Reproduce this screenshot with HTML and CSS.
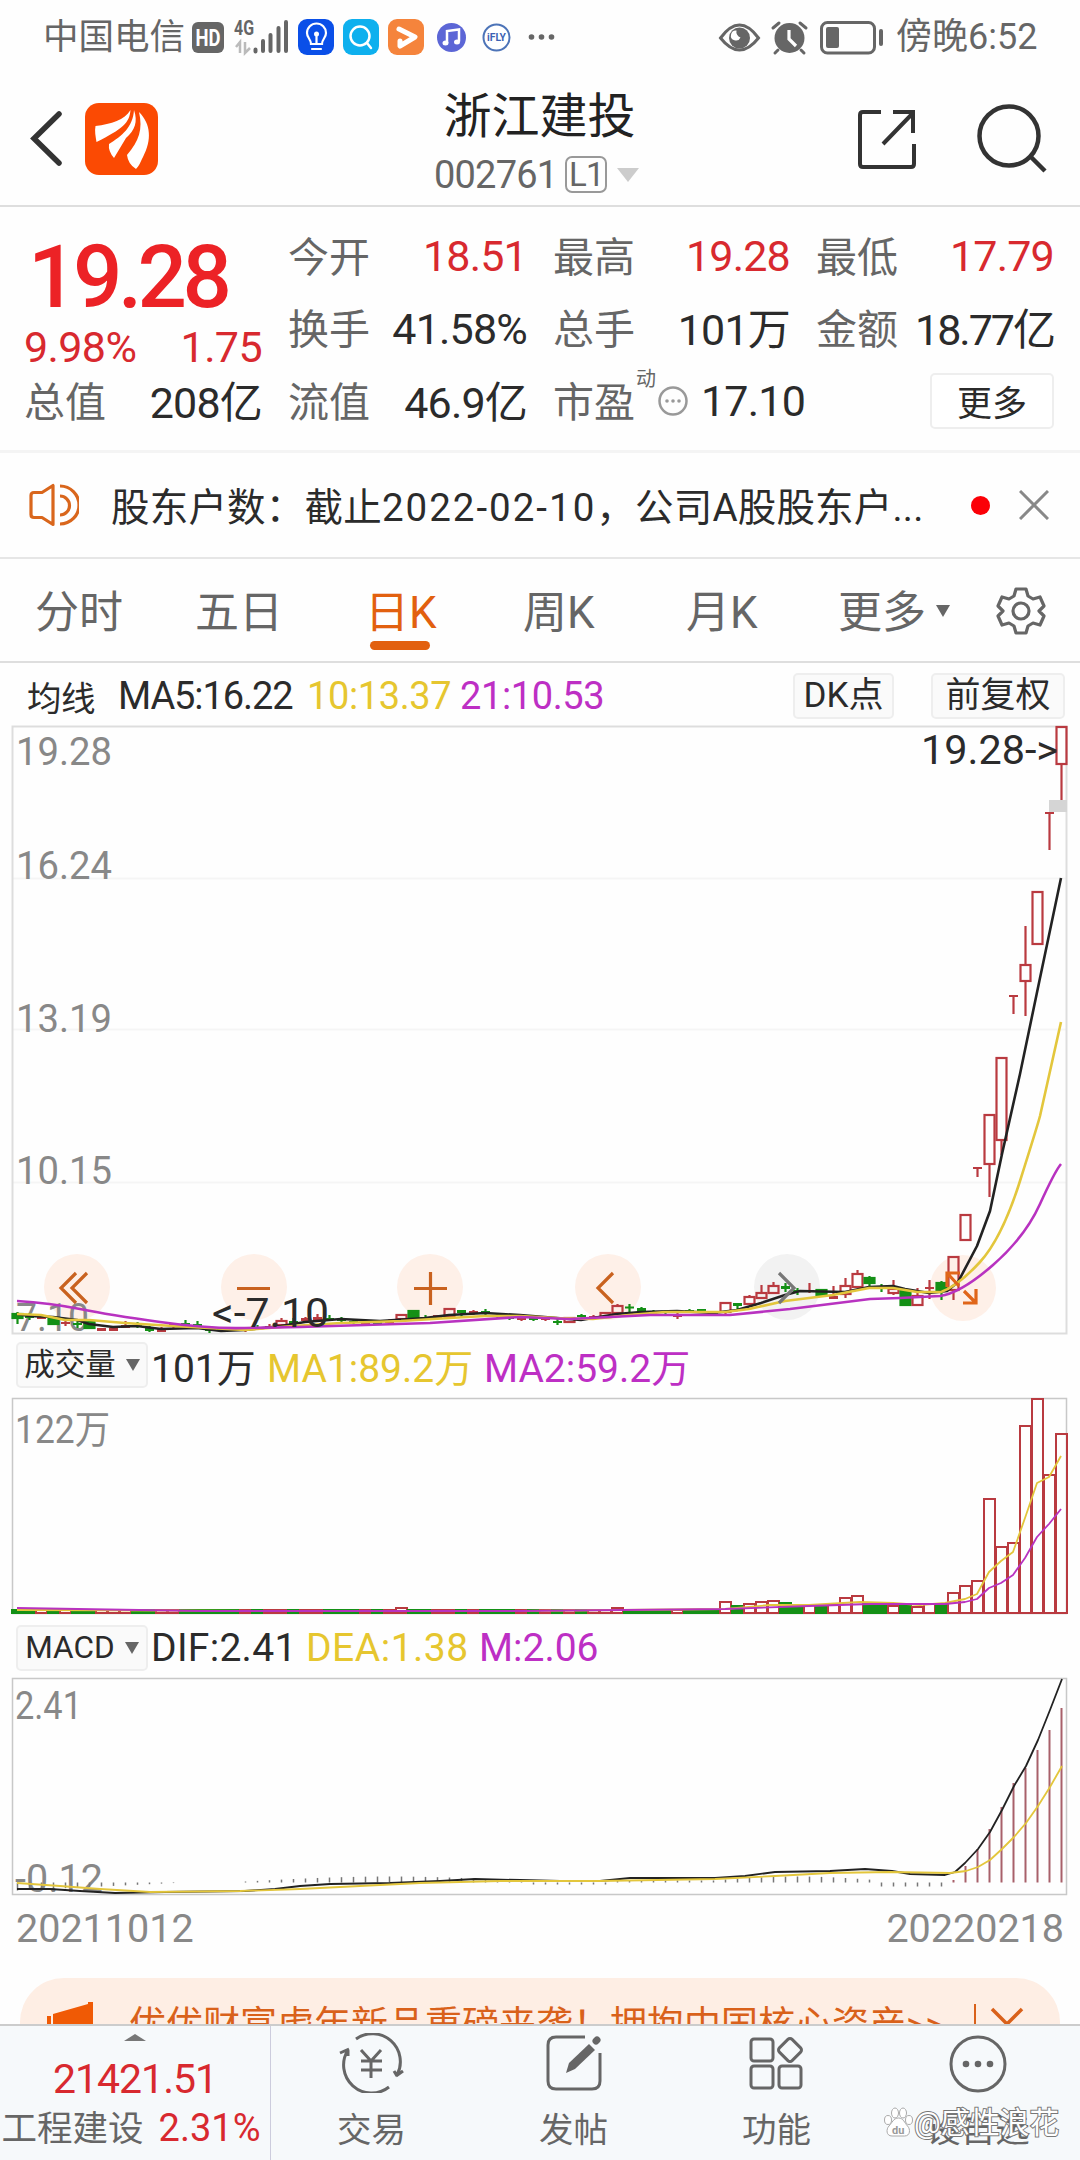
FILE: index.html
```
<!DOCTYPE html>
<html lang="zh-CN">
  <head>
    <meta charset="UTF-8" />
    <meta name="viewport" content="width=device-width, initial-scale=1.0" />
    <title>浙江建投 002761</title>
    <link rel="stylesheet" href="styles.css">
  </head>
  <body>
    <div class="status-bar">
      <span class="carrier">中国电信</span>
      <svg class="status-icons" width="370" height="40" viewBox="190 16 370 40">
        <rect x="192" y="21" width="32" height="31" rx="6" fill="#666" />
        <text x="208" y="45" class="hd" textLength="25" lengthAdjust="spacingAndGlyphs">HD</text>
        <text x="234" y="34" class="net" textLength="20" lengthAdjust="spacingAndGlyphs">4G</text>
        <path d="M240 52V41l-4 5M245 41v11l5-5" fill="none" stroke="#bbb" stroke-width="2.5" />
        <path d="M255.5 50.5v-2M263 50V40M270.5 50V34M278.5 50V27M286 50V21" stroke="#666" stroke-width="4" stroke-linecap="round" />
        <rect x="298" y="18" width="36" height="36" rx="9" fill="#0a4fe8" />
        <path d="M311 43c0-5-4-6-4-11a9.5 9.5 0 0 1 19 0c0 5-4 6-4 11zM312 48h9M316.5 43v-9" fill="none" stroke="#fff" stroke-width="2.2" stroke-linecap="round" />
        <circle cx="316.5" cy="33" r="2.5" fill="#fff" />
        <rect x="343" y="18" width="36" height="36" rx="9" fill="#0eb0ee" />
        <circle cx="360" cy="35" r="9.5" fill="none" stroke="#fff" stroke-width="2.5" />
        <path d="M367 42l4 5" stroke="#fff" stroke-width="2.5" stroke-linecap="round" />
        <rect x="388" y="18" width="36" height="36" rx="9" fill="#f5843c" />
        <path d="M399 28l16 8-15 9v-5" fill="none" stroke="#fff" stroke-width="5" stroke-linejoin="round" stroke-linecap="round" />
        <circle cx="451.5" cy="36.5" r="14.5" fill="#5c66d6" />
        <path d="M447 42V30l12-1.5v12" fill="none" stroke="#fff" stroke-width="2.5" />
        <ellipse cx="445.5" cy="42" rx="3" ry="2.5" fill="#fff" />
        <ellipse cx="457" cy="41" rx="3" ry="2.5" fill="#fff" />
        <circle cx="496.5" cy="36.5" r="13" fill="#fff" stroke="#4d74b8" stroke-width="2" />
        <text x="487" y="40" class="ifly" textLength="19" lengthAdjust="spacingAndGlyphs">iFLY</text>
        <g fill="#666"><circle cx="531.5" cy="36" r="2.8" /><circle cx="541.5" cy="36" r="2.8" /><circle cx="551.5" cy="36" r="2.8" /></g>
      </svg>
      <svg class="status-right" width="170" height="40" viewBox="716 16 170 40">
        <path d="M720.5 37q19-26 38 0q-19 24-38 0z" fill="none" stroke="#666" stroke-width="3" />
        <circle cx="739.5" cy="37" r="10.5" fill="#666" />
        <path d="M736.5 29.5a5 5 0 1 0 4 7a6 6 0 0 1-4-7" fill="#fff" />
        <circle cx="789.5" cy="37" r="15" fill="#666" />
        <path d="M773 27l6-5M800 22l6 5M778 49l-3 3M801 49l3 3" stroke="#666" stroke-width="3" stroke-linecap="round" />
        <path d="M789 29v9l7 7" fill="none" stroke="#fff" stroke-width="3.2" />
        <rect x="821.5" y="21.5" width="53" height="30.5" rx="6" fill="none" stroke="#666" stroke-width="3" />
        <rect x="826" y="26" width="13" height="21" rx="2" fill="#666" />
        <rect x="879" y="28" width="4" height="17" rx="2" fill="#666" />
      </svg>
      <span class="clock">傍晚6:52</span>
    </div>

    <div class="header">
      <svg width="180" height="100" viewBox="0 90 180 100">
        <path d="M59 114L34 138.5l25 24.5" fill="none" stroke="#333" stroke-width="5.5" stroke-linecap="round" />
        <rect x="85" y="103" width="73" height="72" rx="14" fill="#fb4a03" />
        <g fill="#fff">
          <path d="M95.500 126c16-2 29-6 35-16c-1 13-8 19-34 32c-1-6-2-11-1-16z" />
          <path d="M134 110c4 12 1 20-8 28l-12 20q-6-7-5-14c13-8 24-17 25-34z" />
          <path d="M139 112c12 12 13 28 4 45c-3 6-4 9-7 12q-8-5-9-14c12-14 16-26 12-43z" />
        </g>
      </svg>
      <div class="stock-title">
        <div class="stock-name">浙江建投</div>
        <div class="stock-code">
          <span>002761</span><span class="level">L1</span><span class="triangle"></span>
        </div>
      </div>
      <svg class="header-tools" width="200" height="70" viewBox="850 104 200 70">
        <g fill="none" stroke="#333" stroke-width="4">
          <path d="M881 112h-18q-3 0-3 3v49q0 3 3 3h48q3 0 3-3v-20M893 112h20v21M913 113L883 144" />
          <circle cx="1009" cy="136" r="29.5" stroke-width="4.5" />
          <path d="M1031 157l14 14" stroke-width="4.5" />
        </g>
      </svg>
    </div>

    <div class="quote">
      <div class="quote-col first">
        <div class="price">19.28</div>
        <div class="cell change red"><span>9.98%</span><span>1.75</span></div>
        <div class="cell"><label>总值</label><b class="unit">208亿</b></div>
      </div>
      <div class="quote-col">
        <div class="cell"><label>今开</label><b class="red">18.51</b></div>
        <div class="cell"><label>换手</label><b>41.58%</b></div>
        <div class="cell"><label>流值</label><b class="unit">46.9亿</b></div>
      </div>
      <div class="quote-col">
        <div class="cell"><label>最高</label><b class="red">19.28</b></div>
        <div class="cell"><label>总手</label><b class="unit">101万</b></div>
        <div class="cell pe">
          <label>市盈</label><sup>动</sup>
          <svg width="30" height="30" viewBox="0 0 30 30">
            <circle cx="15" cy="15" r="13.5" fill="none" stroke="#999" stroke-width="2.5" />
            <g fill="#999"><circle cx="9" cy="15" r="1.8" /><circle cx="15" cy="15" r="1.8" /><circle cx="21" cy="15" r="1.8" /></g>
          </svg>
          <b>17.10</b>
        </div>
      </div>
      <div class="quote-col">
        <div class="cell"><label>最低</label><b class="red">17.79</b></div>
        <div class="cell"><label>金额</label><b class="unit tight">18.77亿</b></div>
        <div class="cell end"><button class="more">更多</button></div>
      </div>
    </div>

    <div class="notice">
      <svg width="50" height="44" viewBox="0 0 50 44" fill="none" stroke="#d9661c" stroke-width="3.2">
        <path d="M24 2.5v39L13 34.5H5q-3 0-3-3v-19q0-3 3-3h8z" stroke-linejoin="round" />
        <path d="M31 13a9.5 9.5 0 0 1 0 19M31 3a19 19 0 0 1 0 38" />
      </svg>
      <span class="notice-text">股东户数：截止<span class="date">2022-02-10</span>，公司A股股东户...</span>
      <span class="dot"></span>
      <svg width="30" height="30" viewBox="0 0 30 30"><path d="M1 1l28 28M29 1L1 29" stroke="#888" stroke-width="3" /></svg>
    </div>

    <div class="tabs">
      <span class="tab">分时</span>
      <span class="tab">五日</span>
      <span class="tab active">日K</span>
      <span class="tab">周K</span>
      <span class="tab">月K</span>
      <span class="tab">更多<i class="caret"></i></span>
      <svg width="50" height="50" viewBox="0 0 50 50" fill="none" stroke="#666" stroke-width="3.2" stroke-linejoin="round">
        <path d="M20 3h10l2 7 5 3 7-2 4 9-5 5 5 5-4 9-7-2-5 3-2 7H20l-2-7-5-3-7 2-4-9 5-5-5-5 4-9 7 2 5-3z" />
        <circle cx="25" cy="25" r="8" />
      </svg>
    </div>

    <div class="ma-row">
      <span class="ma-name">均线</span>
      <span class="ma5">MA5:16.22</span>
      <span class="ma10 yellow">10:13.37</span>
      <span class="ma21 purple">21:10.53</span>
      <button class="tool dk">DK点</button>
      <button class="tool fq">前复权</button>
    </div>

    <svg class="chart" width="1080" height="608" viewBox="0 726 1080 608">
      <path class="grid" d="M12 878.5H1066M12 1029.5H1066M12 1182.5H1066" />
      <path class="frame" d="M12.5 726.5H1066.5V1333.5H12.5z" />
      <g id="pads">
        <circle cx="77" cy="1287" r="33" /><circle cx="254" cy="1287" r="33" />
        <circle cx="430" cy="1287" r="33" /><circle cx="608" cy="1287" r="33" />
        <circle cx="787" cy="1287" r="33" class="off" /><circle cx="963" cy="1288" r="33" />
      </g>
      <g class="axis">
        <text x="16" y="765" textLength="96" lengthAdjust="spacingAndGlyphs">19.28</text>
        <text x="16" y="879" textLength="96" lengthAdjust="spacingAndGlyphs">16.24</text>
        <text x="16" y="1032" textLength="96" lengthAdjust="spacingAndGlyphs">13.19</text>
        <text x="16" y="1184" textLength="96" lengthAdjust="spacingAndGlyphs">10.15</text>
        <text x="16" y="1331" textLength="73" lengthAdjust="spacingAndGlyphs">7.10</text>
      </g>
      <g id="candles"></g>
      <rect x="1049" y="800" width="18" height="12" fill="#d5d5d5" />
      <polyline class="line dark" points="17,1314 29,1316 53,1317 77,1320 89,1324 113,1327 137,1326 161,1329 197,1328 221,1331 245,1330 281,1326 305,1322 341,1319 380,1321 425,1318 449,1315 485,1313 520,1315 557,1318 581,1320 617,1314 641,1312 677,1311 713,1313 737,1310 761,1303 785,1295 800,1291 845,1292 869,1287 893,1286 905,1289 929,1293 947,1291 958,1282 977,1246 990,1211 1002,1154 1020,1074 1040,978 1061,878" />
      <path class="line gold" d="M17 1314L41 1315 65 1320 89 1320 125 1323 173 1326 245 1330 293 1326 341 1323 401 1321 449 1318 485 1316 520 1316 557 1318 593 1319 629 1315 665 1312 725 1312 749 1309 785 1301 833 1295 869 1288 893 1288 917 1292 941 1292Q958 1286 980 1262T1020 1181T1040 1116T1061 1022" />
      <path class="line pink" d="M17 1301Q50 1303 80 1309T160 1322T245 1328L300 1327 430 1323 520 1317 570 1319 650 1315 730 1315 790 1309 870 1299 900 1298 940 1296Q961 1293 993 1265T1040 1204T1061 1164" />
      <g fill="none" stroke="#c9621f" stroke-width="3.2">
        <path d="M76 1273l-15 15 15 15M87 1273l-15 15 15 15" />
        <path d="M237 1288.5h33" />
        <path d="M414 1288.5h33M430.5 1272v33" />
        <path d="M613 1273l-15 15 15 15" />
        <path d="M779 1273l15 15-15 15" stroke="#777" />
        <path d="M947 1287v-14h13M948 1274l11 12M976 1289v14h-13M976 1303l-12-12" stroke="#e0661a" />
      </g>
      <g class="mark">
        <text x="921" y="764" textLength="137" lengthAdjust="spacingAndGlyphs">19.28-&gt;</text>
        <text x="212" y="1327" textLength="117" lengthAdjust="spacingAndGlyphs">&lt;-7.10</text>
      </g>
    </svg>

    <div class="ind-row">
      <button class="picker">成交量<i class="caret"></i></button>
      <span class="v1">101万</span>
      <span class="v2 yellow">MA1:89.2万</span>
      <span class="v3 purple">MA2:59.2万</span>
    </div>
    <svg class="chart" width="1080" height="218" viewBox="0 1398 1080 218">
      <path class="frame dim" d="M12.5 1398.5H1066.5V1613.5H12.5z" />
      <g class="axis"><text x="15" y="1443" textLength="95" lengthAdjust="spacingAndGlyphs">122万</text></g>
      <g id="volume"></g>
      <polyline class="thin gold" points="17,1610 300,1611 520,1611 725,1609 770,1605 809,1605 860,1602 893,1603 920,1605 945,1603 965,1599 977,1594 989,1572 1001,1561 1013,1552 1025,1518 1037,1483 1049,1477 1061,1456" />
      <polyline class="thin pink" points="17,1608 200,1611 520,1611 725,1609 809,1606 870,1604 945,1604 965,1602 977,1599 989,1588 1001,1583 1013,1575 1025,1558 1037,1537 1049,1524 1061,1509" />
    </svg>

    <div class="ind-row macd">
      <button class="picker">MACD<i class="caret"></i></button>
      <span class="m1">DIF:2.41</span>
      <span class="m2 yellow">DEA:1.38</span>
      <span class="m3 purple">M:2.06</span>
    </div>
    <svg class="chart" width="1080" height="217" viewBox="0 1678 1080 217">
      <path class="frame dim" d="M12.5 1678.5H1066.5V1894.5H12.5z" />
      <g class="axis">
        <text x="15" y="1719" textLength="67" lengthAdjust="spacingAndGlyphs">2.41</text>
        <text x="15" y="1892" textLength="88" lengthAdjust="spacingAndGlyphs">-0.12</text>
      </g>
      <g id="macd"></g>
      <polyline class="thin dark" points="17,1889 50,1889 80,1891 115,1893 165,1892 245,1891 275,1889 300,1886 330,1884 390,1883 440,1881 475,1879 520,1880 560,1881 600,1881 630,1878 715,1878 745,1876 775,1872 830,1871 865,1869 892,1871 910,1874 945,1875 955,1872 965,1863 978,1849 990,1832 1002,1810 1014,1786 1026,1766 1038,1740 1050,1710 1062,1679" />
      <polyline class="thin gold" points="17,1883 60,1886 100,1889 150,1892 240,1891 300,1889 360,1886 420,1883 500,1881 600,1881 715,1879 775,1876 830,1873 890,1872 950,1873 966,1871 978,1867 990,1860 1002,1849 1014,1837 1026,1823 1038,1806 1050,1787 1062,1766" />
    </svg>

    <div class="dates"><span>20211012</span><span>20220218</span></div>

    <div class="promo-wrap">
      <div class="promo">
        <svg width="60" height="50" viewBox="0 0 60 50" fill="#f05a05"><path d="M0 14h4v30H0zM6 12L41 2V0h5v40h-5L6 32z" /></svg>
        <span class="promo-text">优优财富虎年新品重磅来袭！拥抱中国核心资产&gt;&gt;</span>
        <span class="promo-line"></span>
        <svg width="34" height="34" viewBox="0 0 34 34"><path d="M2 2l30 30M32 2L2 32" stroke="#d9611a" stroke-width="3.5" /></svg>
      </div>
    </div>

    <div class="nav">
      <div class="index">
        <i class="up"></i>
        <div class="index-value red">21421.51</div>
        <div class="index-name">工程建设<span class="red">2.31%</span></div>
      </div>
      <div class="nav-item">
        <svg width="66" height="60" viewBox="0 0 66 60" fill="none" stroke="#666" stroke-width="3">
          <path d="M17 6A28 28 0 0 1 58 42M58 43l-3-5M57 43l7-5M50 54A28 28 0 0 1 9 17M1 20l9-4M9 17v6" />
          <path d="M22 17l10 11 10-11M32 28v17M22 28h21M22 37h21" />
        </svg>
        <span>交易</span>
      </div>
      <div class="nav-item">
        <svg width="66" height="60" viewBox="0 0 66 60" fill="none" stroke="#666" stroke-width="3">
          <path d="M44 4H15q-8 0-8 8v36q0 8 8 8h36q8 0 8-8V20" />
          <path d="M25 40l3-10 20-19 6 6-20 19z" fill="#666" stroke="none" />
          <path d="M55 8l1-1" stroke-width="7" stroke-linecap="round" />
        </svg>
        <span>发帖</span>
      </div>
      <div class="nav-item">
        <svg width="66" height="60" viewBox="0 0 66 60" fill="none" stroke="#666" stroke-width="3">
          <rect x="7" y="6" width="22" height="22" rx="3" /><rect x="7" y="33" width="22" height="22" rx="3" />
          <rect x="35" y="33" width="22" height="22" rx="3" />
          <rect x="37" y="8" width="18" height="18" rx="3" transform="rotate(45 46 17)" />
        </svg>
        <span>功能</span>
      </div>
      <div class="nav-item">
        <svg width="66" height="60" viewBox="0 0 66 60" fill="none" stroke="#666" stroke-width="3">
          <circle cx="33" cy="31" r="27" />
          <g fill="#666" stroke="none"><circle cx="21" cy="31" r="3.3" /><circle cx="33" cy="31" r="3.3" /><circle cx="45" cy="31" r="3.3" /></g>
        </svg>
        <span>设自选</span>
      </div>
      <svg class="watermark" width="190" height="44" viewBox="0 0 190 44">
        <g fill="#fff" stroke="#aaa" stroke-width="1">
          <ellipse cx="7" cy="18" rx="3.5" ry="4.5" /><ellipse cx="14" cy="11" rx="3.5" ry="5" />
          <ellipse cx="22" cy="11" rx="3.5" ry="5" /><ellipse cx="28" cy="18" rx="3.5" ry="4.5" />
          <path d="M17.5 16c5 0 6 5 9 8s3 10-3 10H11c-6 0-6-7-3-10s4.500-8 9.500-8z" />
        </g>
        <text x="11" y="32" class="du">du</text>
        <text x="33" y="31" class="wm" textLength="145" lengthAdjust="spacingAndGlyphs">@感性浪花</text>
      </svg>
    </div>

    <script src="chart.js"></script>
  </body>
</html>
```
FILE: styles.css
```
* {
  box-sizing: border-box;
}
body {
  margin: 0;
  width: 1080px;
  height: 2160px;
  overflow: hidden;
  display: flex;
  flex-direction: column;
  background: #fefefe;
  color: #2b2b2b;
  font-family: Roboto, "Noto Sans CJK SC", sans-serif;
}
svg,
span {
  flex-shrink: 0;
}
svg {
  display: block;
}
button {
  font-family: inherit;
  color: #2b2b2b;
  padding: 0;
  background: #fafafa;
  border: 2px solid #eee;
  border-radius: 5px;
}
.red {
  color: #d8292f;
}
.yellow {
  color: #e6c62f;
}
.purple {
  color: #bd2fc4;
}

/* status bar */
.status-bar {
  height: 74px;
  padding: 0 43px 0 43px;
  display: flex;
  align-items: center;
  color: #666;
  font-size: 35.5px;
  line-height: 40px;
}
.carrier {
  width: 147px;
}
.status-right {
  margin-left: 156px;
}
.clock {
  margin-left: 10px;
  font-size: 36px;
  white-space: nowrap;
}
.hd {
  font: bold 23px Roboto;
  fill: #fff;
  text-anchor: middle;
}
.net {
  font: bold 20px Roboto;
  fill: #666;
}
.ifly {
  font: bold 10px Roboto;
  fill: #3c62b4;
}

/* header */
.header {
  height: 133px;
  border-bottom: 2px solid #dedede;
  display: flex;
  justify-content: space-between;
  padding-top: 16px;
}
.stock-title {
  width: 210px;
  margin-left: 76px;
}
.stock-name {
  font-size: 48px;
  line-height: 54px;
  color: #222;
  margin: 0 0 0 -27px;
  text-align: center;
  white-space: nowrap;
}
.stock-code {
  display: flex;
  align-items: center;
  margin: 11px 0 0 -14px;
  color: #666;
  font-size: 38px;
  line-height: 40px;
  letter-spacing: -0.8px;
}
.level {
  width: 42px;
  height: 37px;
  margin-left: 8px;
  border: 2px solid #999;
  border-radius: 7px;
  font-size: 33px;
  line-height: 34px;
  text-align: center;
}
.triangle {
  margin-left: 10px;
  border: 11px solid transparent;
  border-top: 14px solid #ccc;
  border-bottom: 0;
}
.header-tools {
  margin: 14px 30px 0 0;
}

/* quote block */
.quote {
  height: 247px;
  padding: 13px 0 0 24px;
  border-bottom: 3px solid #f4f4f4;
  display: grid;
  grid-template-columns: 238px 239px 237px 238px;
  column-gap: 26px;
}
.cell {
  height: 72.5px;
  display: flex;
  align-items: center;
  justify-content: space-between;
  font-size: 43px;
  white-space: nowrap;
}
.cell label {
  color: #666;
  font-size: 41px;
  padding-bottom: 5px;
}
.cell b {
  font-weight: normal;
  letter-spacing: -0.8px;
}
.cell .unit {
  padding-bottom: 5px;
}
.cell .tight {
  letter-spacing: -2px;
}
.price {
  height: 110px;
  padding-left: 4px;
  color: #ec2226;
  font-size: 87px;
  font-weight: 500;
  line-height: 114px;
  letter-spacing: -4.5px;
}
.first .change {
  height: 35px;
  line-height: 35px;
  letter-spacing: -0.6px;
}
.pe {
  justify-content: flex-start;
}
.pe sup {
  font-size: 20px;
  color: #666;
  margin: -44px 2px 0 1px;
  line-height: 20px;
}
.pe b {
  margin-left: 13px;
}
.cell.end {
  justify-content: flex-end;
}
.more {
  width: 124px;
  height: 56px;
  padding-bottom: 3px;
  font-size: 35px;
  background: #fff;
}

/* notice */
.notice {
  height: 106px;
  border-bottom: 2px solid #e6e6e6;
  display: flex;
  align-items: center;
  padding: 0 31px 0 29px;
}
.notice-text {
  width: 892px;
  padding: 0 0 2px 32px;
  font-size: 38.5px;
  letter-spacing: 0.2px;
  white-space: nowrap;
}
.date {
  letter-spacing: 2px;
}
.dot {
  width: 19px;
  height: 19px;
  margin-right: auto;
  border-radius: 50%;
  background: #fb0007;
}

/* period tabs */
.tabs {
  height: 104px;
  border-bottom: 2px solid #dedede;
  display: grid;
  grid-template-columns: 160px 170px 158px 163px 152px 158px 50px;
  padding-left: 35px;
  align-items: center;
}
.tab {
  height: 104px;
  line-height: 108px;
  color: #666;
  font-size: 44px;
  white-space: nowrap;
}
.active {
  color: #e2600f;
  display: flex;
  flex-direction: column;
}
.active::after {
  content: "";
  width: 60px;
  height: 9px;
  margin: -26px 0 0 5px;
  border-radius: 5px;
  background: #e2600f;
}
.caret {
  display: inline-block;
  margin-left: 10px;
  border: 7.5px solid transparent;
  border-top: 12px solid #666;
  border-bottom: 0;
  vertical-align: middle;
}
.tab .caret {
  margin-bottom: 12px;
}

/* moving average row */
.ma-row {
  height: 63px;
  display: flex;
  align-items: center;
  padding: 2px 15px 0 27px;
  font-size: 38px;
  letter-spacing: -0.4px;
  white-space: nowrap;
}
.ma-name {
  width: 91px;
  font-size: 34.5px;
}
.ma5 {
  width: 189px;
  letter-spacing: -1.1px;
}
.ma10 {
  width: 153px;
}
.tool {
  height: 46px;
  font-size: 35px;
  line-height: 38px;
}
.dk {
  width: 101px;
  margin-left: auto;
}
.fq {
  width: 134px;
  margin-left: 37px;
}

/* charts */
.chart {
  flex-shrink: 0;
  overflow: visible;
}
.frame {
  fill: none;
  stroke: #ddd;
  stroke-width: 2;
}
.dim {
  stroke: #c8c8c8;
  stroke-width: 1.5;
}
.grid {
  stroke: #f5f5f5;
  stroke-width: 2;
}
.axis text {
  font-size: 39px;
  fill: #888;
}
.mark text {
  font-size: 40px;
  fill: #2b2b2b;
}
#pads circle {
  fill: #fef0e8;
}
#pads .off {
  fill: #f2f2f2;
}
.line,
.thin {
  fill: none;
  stroke-width: 2.6;
  stroke-linejoin: round;
}
.thin {
  stroke-width: 1.8;
}
.dark {
  stroke: #222;
}
.gold {
  stroke: #e3c63c;
}
.pink {
  stroke: #b832c0;
}

/* indicator rows */
.ind-row {
  height: 64px;
  display: flex;
  align-items: center;
  padding: 0 0 2px 16px;
  font-size: 39px;
  white-space: nowrap;
}
.ind-row.macd {
  height: 62px;
  padding: 2px 0 0 16px;
}
.picker {
  width: 132px;
  height: 46px;
  margin-right: 3px;
  font-size: 30.5px;
  line-height: 36px;
  display: flex;
  align-items: center;
  justify-content: center;
}
.macd .picker {
  font-size: 31.5px;
}
.v1 {
  width: 116px;
}
.v2 {
  width: 217px;
}
.m1 {
  width: 155px;
  letter-spacing: 0.3px;
}
.m2 {
  width: 173px;
  letter-spacing: 0.5px;
}

.dates {
  height: 83px;
  padding: 0 16px;
  display: flex;
  justify-content: space-between;
  color: #888;
  font-size: 39.5px;
  line-height: 67px;
}

/* promo strip, cut off by the nav */
.promo-wrap {
  height: 46px;
  overflow: hidden;
  padding: 0 20px;
}
.promo {
  height: 92px;
  padding: 0 36px 0 27px;
  border-radius: 44px;
  background: #feeee4;
  color: #d9611a;
  display: flex;
  align-items: center;
}
.promo svg:first-child {
  margin-top: 6px;
}
.promo-text {
  width: 867px;
  padding: 0 0 5px 22px;
  font-size: 37px;
  white-space: nowrap;
}
.promo-line {
  width: 2px;
  height: 40px;
  margin-right: auto;
  background: #d9611a;
}

/* bottom navigation */
.nav {
  position: relative;
  height: 136px;
  flex-shrink: 0;
  border-top: 2px solid #ccc;
  background: #f6f9fb;
  display: grid;
  grid-template-columns: 271px 201px 203px 203px 200px;
  color: #666;
}
.index {
  border-right: 1px solid #ccd;
  display: flex;
  flex-direction: column;
  align-items: center;
  padding-top: 8px;
  white-space: nowrap;
}
.up {
  border: 11px solid transparent;
  border-top: 0;
  border-bottom: 7px solid #777;
}
.index-value {
  margin-top: 14px;
  font-size: 41px;
  line-height: 48px;
  letter-spacing: -1px;
}
.index-name {
  font-size: 35.5px;
  line-height: 50px;
  margin: 0 8px 0 0;
}
.index-name span {
  margin-left: 15px;
  font-size: 38px;
}
.nav-item {
  display: flex;
  flex-direction: column;
  align-items: center;
  padding-top: 7px;
}
.nav-item span {
  margin-top: 12px;
  font-size: 34.5px;
  line-height: 50px;
}
.watermark {
  position: absolute;
  left: 881px;
  top: 76px;
}
.wm {
  font-size: 30px;
  fill: #fff;
  stroke: #777;
  stroke-width: 2;
  paint-order: stroke;
}
.du {
  font: bold 11px Roboto;
  fill: #999;
}
```
FILE: chart.js
```
const STEP = 12;
const FIRST_X = 17.5;
const RED = "#b93a40";
const GREEN = "#149016";

// [day, colour, body top, body bottom, wick top, wick bottom]
const days = [
  [0, "g", 1314, 1318, 1312, 1324], [1, "g", 1315, 1318, 1313, 1320],
  [2, "r", 1317, 1319, 1314, 1319], [3, "g", 1319, 1324, 1318, 1324],
  [4, "r", 1322, 1324, 1320, 1326], [5, "g", 1323, 1325, 1320, 1328],
  [6, "g", 1322, 1328, 1322, 1328], [7, "r", 1328, 1331, 1328, 1331],
  [8, "r", 1328, 1331, 1326, 1331], [9, "r", 1325, 1328, 1321, 1328],
  [10, "g", 1325, 1327, 1322, 1328], [11, "g", 1328, 1331, 1326, 1332],
  [12, "r", 1329, 1332, 1327, 1332], [13, "r", 1324, 1326, 1323, 1328],
  [14, "g", 1323, 1326, 1320, 1327], [15, "g", 1324, 1327, 1321, 1328],
  [16, "g", 1329, 1331, 1327, 1333], [17, "g", 1329, 1331, 1328, 1331],
  [18, "g", 1329, 1331, 1328, 1331], [19, "r", 1329, 1331, 1328, 1332],
  [20, "g", 1327, 1329, 1325, 1330], [21, "r", 1326, 1328, 1324, 1329],
  [22, "r", 1321, 1325, 1318, 1326], [23, "g", 1321, 1324, 1318, 1326],
  [24, "r", 1318, 1321, 1317, 1323], [25, "r", 1317, 1320, 1314, 1322],
  [26, "g", 1318, 1320, 1315, 1321], [27, "g", 1319, 1321, 1317, 1322],
  [28, "g", 1321, 1323, 1319, 1324], [29, "r", 1322, 1324, 1320, 1325],
  [30, "g", 1322, 1324, 1320, 1325], [31, "r", 1320, 1323, 1319, 1324],
  [32, "r", 1315, 1319, 1315, 1319], [33, "g", 1311, 1318, 1311, 1318],
  [34, "g", 1317, 1319, 1315, 1320], [35, "r", 1315, 1318, 1315, 1318],
  [36, "r", 1309, 1316, 1309, 1316], [37, "g", 1310, 1313, 1310, 1317],
  [38, "r", 1311, 1314, 1310, 1315], [39, "g", 1311, 1314, 1309, 1315],
  [40, "g", 1315, 1317, 1313, 1318], [41, "g", 1317, 1319, 1315, 1320],
  [42, "r", 1318, 1320, 1316, 1321], [43, "g", 1318, 1320, 1317, 1321],
  [44, "r", 1318, 1320, 1316, 1321], [45, "g", 1321, 1323, 1318, 1325],
  [46, "r", 1318, 1322, 1318, 1323], [47, "g", 1315, 1317, 1314, 1318],
  [48, "r", 1316, 1318, 1315, 1318], [49, "r", 1313, 1317, 1313, 1317],
  [50, "r", 1306, 1313, 1304, 1314], [51, "g", 1307, 1308, 1304, 1312],
  [52, "g", 1308, 1311, 1307, 1313], [53, "g", 1311, 1313, 1310, 1316],
  [54, "g", 1311, 1313, 1310, 1316], [55, "r", 1315, 1317, 1313, 1319],
  [56, "g", 1310, 1312, 1309, 1313], [57, "g", 1309, 1312, 1309, 1312],
  [58, "g", 1312, 1314, 1311, 1315], [59, "r", 1303, 1312, 1303, 1315],
  [60, "g", 1303, 1306, 1303, 1309], [61, "r", 1297, 1304, 1295, 1304],
  [62, "r", 1293, 1298, 1285, 1298], [63, "r", 1286, 1293, 1282, 1293],
  [64, "g", 1286, 1289, 1283, 1292], [65, "g", 1290, 1292, 1288, 1295],
  [66, "r", 1290, 1292, 1283, 1293], [67, "g", 1290, 1295, 1289, 1297],
  [68, "r", 1296, 1299, 1286, 1299], [69, "r", 1286, 1294, 1278, 1298],
  [70, "r", 1274, 1287, 1270, 1287], [71, "g", 1278, 1283, 1276, 1286],
  [72, "g", 1286, 1288, 1284, 1292], [73, "r", 1289, 1293, 1280, 1295],
  [74, "g", 1291, 1305, 1291, 1305], [75, "r", 1296, 1305, 1288, 1305],
  [76, "r", 1287, 1289, 1280, 1299], [77, "g", 1283, 1290, 1281, 1300],
  [78, "r", 1257, 1290, 1257, 1300], [79, "r", 1215, 1240, 1215, 1240],
  [80, "r", 1168, 1168, 1168, 1177], [81, "r", 1115, 1164, 1115, 1197],
  [82, "r", 1058, 1140, 1058, 1155], [83, "r", 996, 996, 996, 1014],
  [84, "r", 965, 981, 926, 1016], [85, "r", 892, 944, 892, 944],
  [86, "r", 813, 813, 813, 850], [87, "r", 727, 764, 727, 800],
];

let out = "";
days.forEach(([i, c, top, bottom, high, low]) => {
  const x = FIRST_X + i * STEP;
  const color = c === "r" ? RED : GREEN;
  out += `<path d="M${x} ${high}V${top}M${x} ${bottom}V${low}" stroke="${color}" stroke-width="2.2"/>`;
  if (bottom - top < 4) {
    out += `<path d="M${x - 4.5} ${(top + bottom) / 2}h9" stroke="${color}" stroke-width="${Math.max(2, bottom - top)}"/>`;
  } else {
    const fill = c === "r" ? "none" : color;
    out += `<rect x="${x - 5}" y="${top}" width="10" height="${bottom - top}" fill="${fill}" stroke="${color}" stroke-width="2.2"/>`;
  }
});
document.getElementById("candles").innerHTML = out;

// tops of the volume bars that rise above the base line
const volTops = {
  32: 1608, 50: 1608, 59: 1602, 60: 1606, 61: 1604, 62: 1602, 63: 1601,
  64: 1603, 65: 1607, 66: 1605, 67: 1606, 68: 1605, 69: 1598, 70: 1596,
  71: 1604, 72: 1606, 73: 1606, 74: 1606, 75: 1607, 76: 1604, 77: 1604,
  78: 1593, 79: 1586, 80: 1581, 81: 1499, 82: 1547, 83: 1543, 84: 1426,
  85: 1399, 86: 1475, 87: 1434,
};
out = "";
days.forEach(([i, c]) => {
  const top = volTops[i] || 1610;
  const color = c === "r" ? RED : GREEN;
  const x = FIRST_X + i * STEP;
  out += `<rect x="${x - 5.5}" y="${top}" width="11" height="${1613 - top}" fill="${c === "r" ? "none" : color}" stroke="${color}" stroke-width="2"/>`;
});
document.getElementById("volume").innerHTML = out;

// MACD columns from the zero line
const ZERO = 1882.5;
const macd = {
  78: 1880, 79: 1866, 80: 1849, 81: 1829, 82: 1807, 83: 1783, 84: 1768,
  85: 1750, 86: 1730, 87: 1708,
};
out = "";
for (let i = 0; i < 88; i++) {
  const x = FIRST_X + i * STEP;
  let end = macd[i];
  let color = "#a8606a";
  if (end === undefined) {
    if (i < 14) end = ZERO + 8 * (1 - i / 14);
    else if (i < 19) continue;
    else if (i < 43) end = ZERO - 1 - 5 * Math.sin(((i - 19) / 24) * Math.PI);
    else if (i < 50) end = ZERO + 2;
    else if (i < 58) end = ZERO - 2;
    else if (i < 72) end = ZERO - 2 - 4 * Math.sin(((i - 58) / 14) * Math.PI);
    else end = ZERO + 4;
    color = "#777";
  }
  out += `<path d="M${x} ${ZERO}V${end}" stroke="${color}" stroke-width="${macd[i] ? 2 : 1.5}"/>`;
}
document.getElementById("macd").innerHTML = out;
```
